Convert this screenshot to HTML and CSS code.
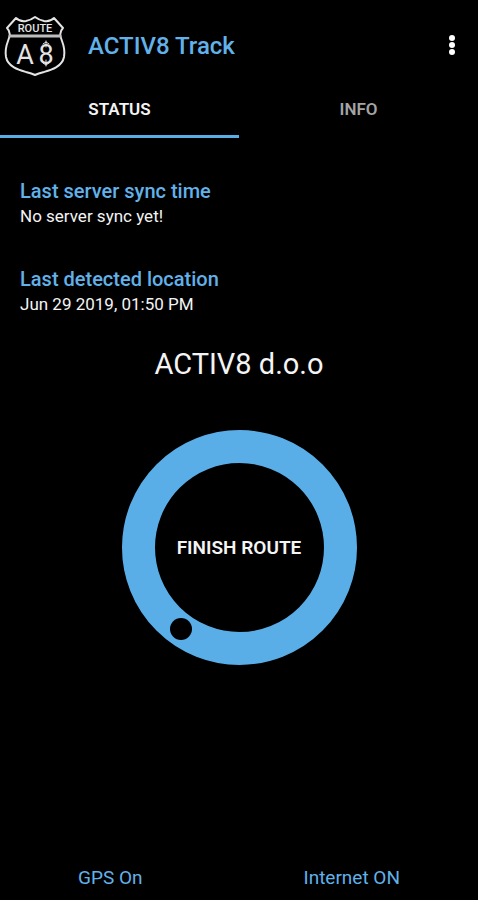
FILE: index.html
```html
<!DOCTYPE html>
<html lang="en">
<head>
  <meta charset="utf-8">
  <meta name="viewport" content="width=device-width, initial-scale=1">
  <title>ACTIV8 Track</title>
  <link rel="stylesheet" href="styles.css">
</head>
<body>
  <div class="app">
    <header class="app-bar">
      <svg class="logo" viewBox="0 0 64 64" role="img" aria-label="Route A8">
        <g fill="none" stroke="#e4e4e4" stroke-width="2" stroke-linejoin="round" stroke-linecap="round">
          <path d="M13 4 Q17 8 23 7 Q28 6 32 3 Q36 6 41 7 Q47 8 51 4 L60 14 C56 18 57 22 59 27 C61 32 62 37 61 43 C59 53 48 56 41 58 C37 59 34 60 32 61 C30 60 27 59 23 58 C16 56 5 53 3 43 C2 37 3 32 5 27 C7 22 8 18 4 14 Z"/>
          <path stroke="#bdbdbd" stroke-width="3" d="M7 22 H57"/>
          <path stroke-width="1" d="M43 27 V33 M43 46 V52 M40 30 L43 28 L46 30 M40 49 L43 51 L46 49"/>
        </g>
        <g fill="#e4e4e4" text-anchor="middle">
          <text class="logo-word" x="32" y="18">ROUTE</text>
          <text class="logo-code" x="22" y="50">A</text>
          <text class="logo-code" x="43" y="50">8</text>
        </g>
      </svg>
      <h1 class="title">ACTIV8 Track</h1>
      <button class="menu" type="button" aria-label="More options">
        <svg class="menu-icon" viewBox="0 0 24 24" aria-hidden="true">
          <circle cx="12" cy="4" r="3"/><circle cx="12" cy="11" r="3"/><circle cx="12" cy="18" r="3"/>
        </svg>
      </button>
    </header>
    <nav class="tabs" role="tablist">
      <button class="tab tab-active" type="button" role="tab" aria-selected="true">STATUS</button>
      <button class="tab" type="button" role="tab" aria-selected="false">INFO</button>
    </nav>
    <main class="content">
      <section class="entry">
        <h2 class="label">Last server sync time</h2>
        <p class="value">No server sync yet!</p>
      </section>
      <section class="entry">
        <h2 class="label">Last detected location</h2>
        <p class="value">Jun 29 2019, 01:50 PM</p>
      </section>
      <p class="company">ACTIV8 d.o.o</p>
      <button class="ring" type="button">FINISH ROUTE<span class="ring-dot"></span></button>
    </main>
    <footer class="status">
      <span>GPS On</span>
      <span>Internet ON</span>
    </footer>
  </div>
</body>
</html>
```
FILE: styles.css
```css
* {
  box-sizing: border-box;
}

body {
  margin: 0;
  background: #000;
  color: #f4f4f4;
  font-family: Roboto, "Liberation Sans", sans-serif;
}

h1, h2, p {
  margin: 0;
}

button {
  padding: 0;
  border: 0;
  background: none;
  color: inherit;
  font: inherit;
  cursor: pointer;
}

.app {
  display: flex;
  flex-direction: column;
  min-height: 100vh;
}

.app-bar {
  display: flex;
  align-items: center;
  height: 92px;
  padding: 0 14px 0 3px;
}

.logo {
  width: 64px;
  height: 64px;
}

.logo-word {
  font-size: 11px;
  font-weight: 500;
}

.logo-code {
  font-size: 27px;
  font-weight: 400;
}

.title {
  flex: 1;
  margin-left: 21px;
  color: #62b1e9;
  font-size: 24px;
  font-weight: 500;
  line-height: 28px;
}

.menu {
  display: flex;
}

.menu-icon {
  width: 24px;
  height: 24px;
  fill: #fff;
}

.tabs {
  display: grid;
  grid-template-columns: 1fr 1fr;
}

.tab {
  height: 46px;
  padding-bottom: 9px;
  border-bottom: 3px solid transparent;
  color: #a4a4a4;
  font-size: 17px;
  font-weight: 600;
}

.tab-active {
  border-bottom-color: #5aaee8;
  color: #f4f4f4;
}

.content {
  display: flex;
  flex: 1;
  flex-direction: column;
  padding: 40px 20px 20px;
}

.entry + .entry {
  margin-top: 38px;
}

.label {
  color: #62b1e9;
  font-size: 20px;
  font-weight: 500;
  line-height: 26px;
}

.value {
  font-size: 17px;
  line-height: 24px;
}

.company {
  margin-top: 30px;
  font-size: 29px;
  line-height: 36px;
  text-align: center;
}

.ring {
  position: relative;
  align-self: center;
  width: 235px;
  height: 235px;
  margin-top: 48px;
  border: 33px solid #5aaee8;
  border-radius: 50%;
  font-size: 19px;
  font-weight: 600;
}

.ring-dot {
  position: absolute;
  bottom: -8px;
  left: 15px;
  width: 22px;
  height: 22px;
  border-radius: 50%;
  background: #000;
}

.status {
  display: flex;
  justify-content: space-between;
  padding: 0 78px 10px;
  color: #62b1e9;
  font-size: 19px;
  line-height: 24px;
}
```
